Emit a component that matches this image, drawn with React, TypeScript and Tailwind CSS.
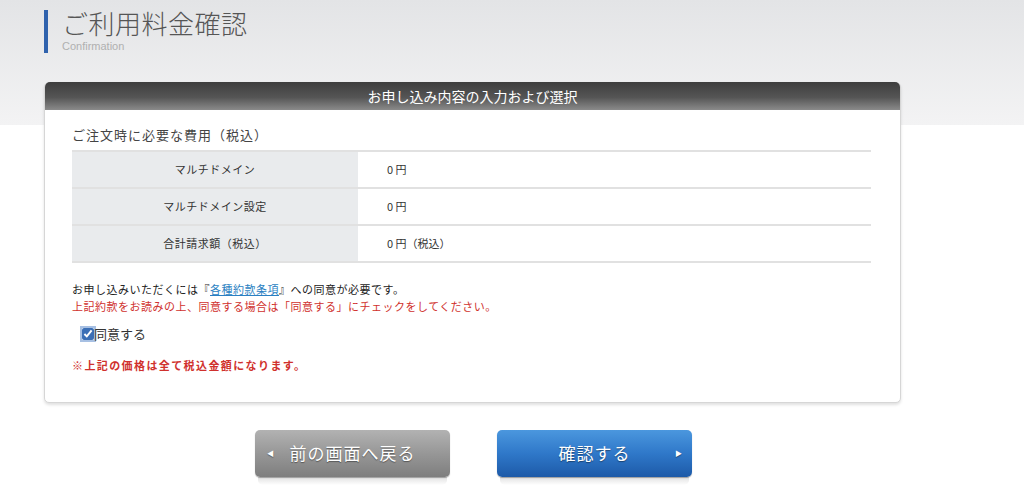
import React, { useState } from 'react';

const rows = [
  { label: 'マルチドメイン', value: '0 円' },
  { label: 'マルチドメイン設定', value: '0 円' },
  { label: '合計請求額（税込）', value: '0 円（税込）' },
];

const App: React.FC = () => {
  const [agreed, setAgreed] = useState(true);

  return (
    <div className="min-h-[488px] w-[1024px] overflow-hidden bg-[linear-gradient(to_bottom,#e3e4e6_0px,#f3f3f4_125px,#ffffff_125px)] font-['Noto_Sans_CJK_JP',sans-serif] text-[#333]">
      {/* page title */}
      <div className="flex h-[82px] items-start pl-[44px] pt-[10px]">
        <div className="h-[43px] w-[4px] bg-[#2f62ad]" />
        <div className="ml-[14px] flex flex-col">
          <h1 className="-mt-[3px] text-[26px] font-light leading-[32px] tracking-[0.5px] text-[#555]">ご利用料金確認</h1>
          <span className="mt-[1px] font-['Liberation_Sans',sans-serif] text-[11px] leading-[13px] text-[#b0b0b0]">Confirmation</span>
        </div>
      </div>

      {/* card */}
      <div className="ml-[44px] w-[857px] rounded-[5px] border border-[#d6d6d6] bg-white shadow-[0_2px_3px_rgba(0,0,0,0.12)]">
        <div className="-mt-px flex h-[28px] items-center justify-center rounded-t-[5px] bg-[linear-gradient(to_bottom,#3e3e3e_0%,#555_55%,#8a8a8a_100%)] text-[14px] text-white">
          お申し込み内容の入力および選択
        </div>

        <div className="px-[27px] pb-[30px] pt-[17px]">
          <p className="text-[13px] leading-[16px] text-[#444] tracking-[1px]">ご注文時に必要な費用（税込）</p>
          <table className="mt-[7px] w-[799px] border-collapse text-[11px]">
            <tbody>
              {rows.map((r) => (
                <tr key={r.label} className="h-[37px] border-y-2 border-[#e1e1e1]">
                  <td className="w-[286px] bg-[#e9ebed] text-center text-[#333] tracking-[0.5px]">{r.label}</td>
                  <td className="pl-[29px] text-[#333]">{r.value}</td>
                </tr>
              ))}
            </tbody>
          </table>

          <p className="mt-[18px] text-[11px] leading-[17px] text-[#222] tracking-[0.5px]">
            お申し込みいただくには『<a href="#" className="text-[#2a7fc2] underline">各種約款条項</a>』への同意が必要です。
          </p>
          <p className="text-[11px] leading-[17px] text-[#d0312d] tracking-[0.5px]">
            上記約款をお読みの上、同意する場合は「同意する」にチェックをしてください。
          </p>
          <label className="ml-[10px] mt-[9px] flex items-center text-[13px] text-[#333]">
            <input
              type="checkbox"
              checked={agreed}
              onChange={(e) => setAgreed(e.target.checked)}
              className="m-0 h-[12px] w-[12px] accent-[#3b6fb6] shadow-[0_0_0_2px_rgba(80,130,200,0.5)] rounded-[2px]"
            />
            <span>同意する</span>
          </label>
          <p className="mt-[14px] text-[11px] font-bold leading-[14px] text-[#d0312d] tracking-[1.4px]">
            ※上記の価格は全て税込金額になります。
          </p>
        </div>
      </div>

      {/* buttons */}
      <div className="ml-[255px] mt-[27px] flex gap-[47px]">
        <div className="flex flex-col">
          <button className="relative flex h-[47px] w-[195px] items-center justify-center rounded-[5px] bg-[linear-gradient(to_bottom,#b2b2b2_0%,#979797_50%,#7e7e7e_100%)] text-[17px] text-white shadow-[0_1px_1px_rgba(0,0,0,0.3)] [text-shadow:0_1px_1px_rgba(0,0,0,0.4)]">
            <span className="absolute left-[12px] text-[7px]">◀</span>
            <span className="tracking-[1px]">前の画面へ戻る</span>
          </button>
          <div className="mx-[3px] h-[8px] bg-[linear-gradient(to_bottom,rgba(0,0,0,0.12),rgba(0,0,0,0))] rounded-b-[5px]" />
        </div>
        <div className="flex flex-col">
          <button className="relative flex h-[47px] w-[195px] items-center justify-center rounded-[5px] bg-[linear-gradient(to_bottom,#4b97de_0%,#2f78c9_50%,#1d5aa8_100%)] text-[17px] text-white shadow-[0_1px_1px_rgba(0,0,0,0.3)] [text-shadow:0_1px_1px_rgba(0,0,0,0.4)]">
            <span className="tracking-[1px]">確認する</span>
            <span className="absolute right-[10px] text-[7px]">▶</span>
          </button>
          <div className="mx-[3px] h-[8px] bg-[linear-gradient(to_bottom,rgba(0,0,0,0.12),rgba(0,0,0,0))] rounded-b-[5px]" />
        </div>
      </div>
    </div>
  );
};

export default App;
